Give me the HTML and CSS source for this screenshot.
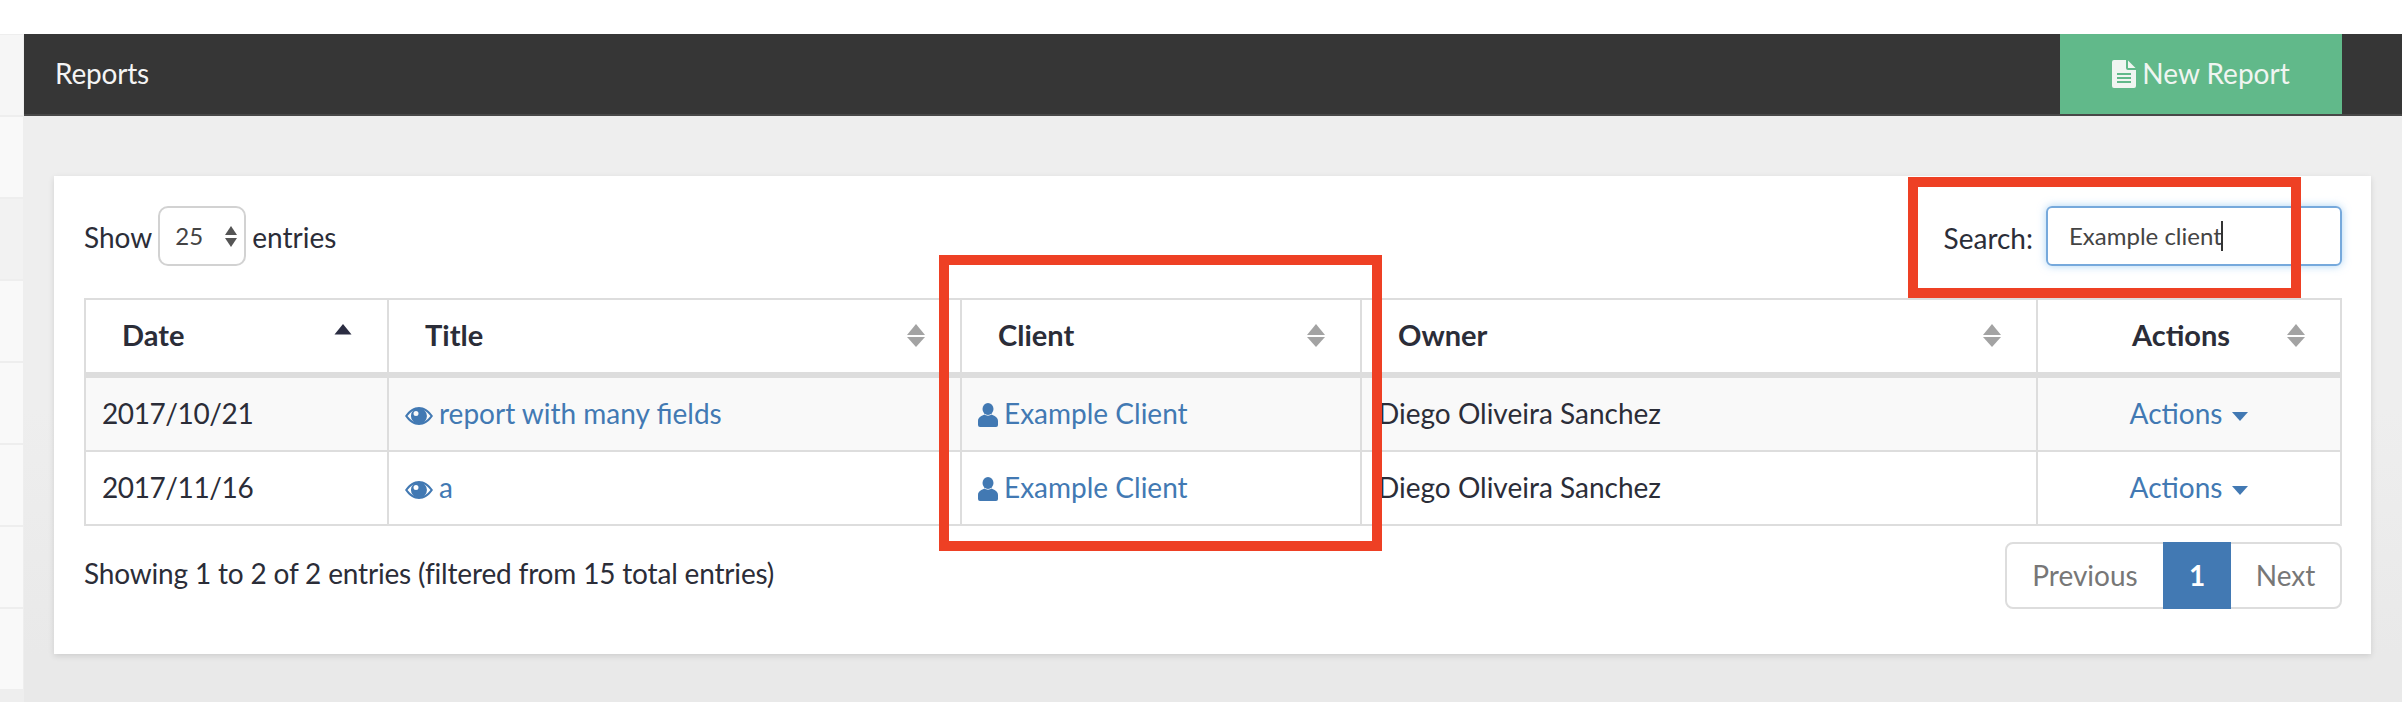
FILE: index.html
```html
<!DOCTYPE html>
<html lang="en">
<head>
<meta charset="utf-8">
<title>Reports</title>
<link rel="stylesheet" href="styles.css">
</head>
<body>
<div class="page">
  <aside class="sidebar">
    <div class="side-item side-first"></div>
    <div class="side-item"></div>
    <div class="side-item side-active"></div>
    <div class="side-item"></div>
    <div class="side-item"></div>
    <div class="side-item"></div>
    <div class="side-item"></div>
    <div class="side-item"></div>
  </aside>
  <main class="main">
    <header class="topbar">
      <span class="topbar-title">Reports</span>
      <a class="new-report">
        <svg class="icon-file" viewBox="0 0 24 28"><path fill-rule="evenodd" d="M0 2a2 2 0 0 1 2-2H14V8a2 2 0 0 0 2 2H24V26a2 2 0 0 1-2 2H2a2 2 0 0 1-2-2ZM5 13v2H19V13ZM5 17v2H19V17ZM5 21v2H19V21Z"/><path d="M16 0.5 23.5 8H16Z"/></svg>
        <span class="new-report-label">New Report</span>
      </a>
    </header>
    <section class="content">
      <div class="card">
        <div class="controls">
          <div class="length">
            <span>Show</span>
            <div class="select">
              <span>25</span>
              <svg class="select-arrows" viewBox="0 0 12 21"><path d="M6 0 12 9H0Z"/><path d="M0 12H12L6 21Z"/></svg>
            </div>
            <span>entries</span>
          </div>
          <div class="search">
            <span class="search-label">Search:</span>
            <div class="search-input"><span>Example client</span><i class="caret-line"></i></div>
          </div>
        </div>
        <table class="grid">
          <colgroup>
            <col class="col-a"><col class="col-b"><col class="col-c"><col class="col-d"><col class="col-e">
          </colgroup>
          <thead>
            <tr>
              <th>Date<svg class="sort" viewBox="0 0 18 23"><path class="sort-on" d="M9 0 17.500 10.500H0.500Z"/></svg></th>
              <th>Title<svg class="sort" viewBox="0 0 18 23"><path d="M9 0 18 11H0Z"/><path d="M0 13H18L9 23Z"/></svg></th>
              <th>Client<svg class="sort" viewBox="0 0 18 23"><path d="M9 0 18 11H0Z"/><path d="M0 13H18L9 23Z"/></svg></th>
              <th>Owner<svg class="sort" viewBox="0 0 18 23"><path d="M9 0 18 11H0Z"/><path d="M0 13H18L9 23Z"/></svg></th>
              <th class="th-actions">Actions<svg class="sort" viewBox="0 0 18 23"><path d="M9 0 18 11H0Z"/><path d="M0 13H18L9 23Z"/></svg></th>
            </tr>
          </thead>
          <tbody>
            <tr class="odd">
              <td class="td-date">2017/10/21</td>
              <td><a class="link"><svg class="icon-eye" viewBox="0 0 28 18"><path fill-rule="evenodd" d="M0 9C4 3 9 0 14 0S24 3 28 9C24 15 19 18 14 18S4 15 0 9ZM2.500 9C6 13.500 10 16 14 16S22 13.500 25.500 9C22 4.500 18 2 14 2S6 4.500 2.500 9Z"/><path fill-rule="evenodd" d="M14 1A8 8 0 1 1 13.900 17 8 8 0 0 1 14 1ZM11 4A2.500 2.500 0 1 0 11 9 2.500 2.500 0 0 0 11 4Z"/></svg>report with many fields</a></td>
              <td><a class="link"><svg class="icon-user" viewBox="0 0 20 24"><ellipse cx="10" cy="6" rx="5.500" ry="6"/><path d="M0 22V18C0 14 4 12.500 6.500 11.500 8 13 12 13 13.500 11.500 16 12.500 20 14 20 18V22Q20 24 18 24H2Q0 24 0 22Z"/></svg>Example Client</a></td>
              <td>Diego Oliveira Sanchez</td>
              <td class="td-actions"><a class="link">Actions<i class="caret-down"></i></a></td>
            </tr>
            <tr>
              <td class="td-date">2017/11/16</td>
              <td><a class="link"><svg class="icon-eye" viewBox="0 0 28 18"><path fill-rule="evenodd" d="M0 9C4 3 9 0 14 0S24 3 28 9C24 15 19 18 14 18S4 15 0 9ZM2.500 9C6 13.500 10 16 14 16S22 13.500 25.500 9C22 4.500 18 2 14 2S6 4.500 2.500 9Z"/><path fill-rule="evenodd" d="M14 1A8 8 0 1 1 13.900 17 8 8 0 0 1 14 1ZM11 4A2.500 2.500 0 1 0 11 9 2.500 2.500 0 0 0 11 4Z"/></svg>a</a></td>
              <td><a class="link"><svg class="icon-user" viewBox="0 0 20 24"><ellipse cx="10" cy="6" rx="5.500" ry="6"/><path d="M0 22V18C0 14 4 12.500 6.500 11.500 8 13 12 13 13.500 11.500 16 12.500 20 14 20 18V22Q20 24 18 24H2Q0 24 0 22Z"/></svg>Example Client</a></td>
              <td>Diego Oliveira Sanchez</td>
              <td class="td-actions"><a class="link">Actions<i class="caret-down"></i></a></td>
            </tr>
          </tbody>
        </table>
        <div class="table-footer">
          <span class="table-info">Showing 1 to 2 of 2 entries (filtered from 15 total entries)</span>
          <nav class="pager">
            <a class="pager-prev">Previous</a>
            <a class="pager-current">1</a>
            <a class="pager-next">Next</a>
          </nav>
        </div>
      </div>
    </section>
  </main>
</div>
<div class="callout callout-client"></div>
<div class="callout callout-search"></div>
</body>
</html>
```
FILE: styles.css
```css
* { box-sizing: border-box; }
html, body { margin: 0; height: 702px; overflow: hidden; background: #fff; }
body {
  position: relative;
  font-family: "Lato", "Liberation Sans", sans-serif;
  font-size: 28px;
  line-height: 36px;
  color: #2b2d38;
}
.page { display: flex; padding-top: 34px; height: 702px; }

.sidebar { width: 24px; flex: none; background: #eeeeee; padding-top: 1px; overflow: hidden; }
.side-item { width: 23px; height: 80px; margin-bottom: 2px; background: #f9f9f9; }
.side-first { background: #f6f6f6; }
.side-active { background: #f2f2f2; }

.main { flex: 1; display: flex; flex-direction: column; min-width: 0; }
.topbar {
  height: 82px;
  flex: none;
  display: flex;
  justify-content: space-between;
  padding: 0 60px 0 31px;
  background: #363636;
  border-bottom: 2px solid #484848;
  color: #f4f4f4;
}
.topbar-title { line-height: 78px; letter-spacing: -.2px; }
.new-report {
  width: 282px;
  display: flex;
  align-items: center;
  justify-content: center;
  gap: 6px;
  background: #61b98a;
  color: #f0f5f1;
}
.new-report-label { padding-bottom: 2px; }
.icon-file { width: 24px; height: 28px; fill: #f0f5f1; }

.content {
  flex: 1;
  padding: 60px 31px 0 30px;
  background: linear-gradient(#eeeeee, #eeeeee 50%, #e9e9e9 92%);
}
.card {
  height: 478px;
  padding: 30px 29px 0 30px;
  background: #fff;
  box-shadow: 0 2px 6px rgba(0, 0, 0, .12);
}

.controls { display: flex; justify-content: space-between; height: 60px; margin-bottom: 32px; }
.length, .search { display: flex; align-items: center; }
.length > span { padding-top: 2px; }
.search-label { padding-top: 4px; }
.length { gap: 6px; }
.search { gap: 13px; }
.select {
  width: 88px;
  height: 60px;
  display: flex;
  align-items: center;
  justify-content: space-between;
  padding: 0 7px 0 15px;
  border: 2px solid #d2d2d2;
  border-radius: 10px;
  font-size: 24px;
  color: #444;
}
.select-arrows { width: 12px; height: 21px; fill: #555; }
.search-input {
  width: 296px;
  height: 60px;
  display: flex;
  align-items: center;
  padding-left: 21px;
  border: 2px solid #76a9dc;
  border-radius: 6px;
  box-shadow: 0 0 8px rgba(102, 175, 233, .55);
  font-size: 24px;
  color: #444;
}
.caret-line { width: 2px; height: 30px; background: #333; margin-left: -1px; }

.grid {
  width: 2258px;
  table-layout: fixed;
  border-collapse: separate;
  border-spacing: 0;
  border-left: 2px solid #ddd;
  border-top: 2px solid #ddd;
}
.col-a { width: 303px; }
.col-b { width: 573px; }
.col-c { width: 400px; }
.col-d { width: 676px; }
.col-e { width: 304px; }
.grid th {
  position: relative;
  height: 78px;
  padding: 0 60px 2px 36px;
  text-align: left;
  font-size: 29px;
  font-weight: 700;
  border-right: 2px solid #ddd;
  border-bottom: 6px solid #ddd;
}
.grid th.th-actions { text-align: center; padding-right: 52px; }
.sort { position: absolute; top: 24px; right: 35px; width: 18px; height: 23px; fill: #a3a3a3; }
.sort .sort-on { fill: #2b2d42; }
.grid td {
  height: 74px;
  padding: 0 16px 3px;
  border-right: 2px solid #ddd;
  border-bottom: 2px solid #ddd;
  white-space: nowrap;
}
.grid .odd td { background: #f9f9f9; }
.grid td.td-date { letter-spacing: -.4px; }
.grid td.td-actions { text-align: center; }
.link { color: #4279b3; }
.icon-eye { width: 28px; height: 18px; fill: #4279b3; margin-right: 6px; vertical-align: -1px; }
.icon-user { width: 20px; height: 24px; fill: #4279b3; margin-right: 6px; vertical-align: -3px; }
.caret-down {
  display: inline-block;
  margin-left: 10px;
  vertical-align: 3px;
  border-top: 9px solid #4279b3;
  border-left: 8px solid transparent;
  border-right: 8px solid transparent;
}

.table-footer { display: flex; justify-content: space-between; align-items: center; margin-top: 16px; }
.table-info { letter-spacing: -.17px; padding-bottom: 6px; }
.pager {
  display: flex;
  height: 67px;
  border: 2px solid #ddd;
  border-radius: 8px;
  color: #777;
}
.pager a { display: flex; align-items: center; justify-content: center; padding-bottom: 2px; }
.pager-prev { width: 156px; }
.pager-current { width: 68px; margin: -2px 0; background: #4279b3; color: #fff; font-weight: 700; }
.pager-next { width: 109px; }

.callout { position: absolute; border: 10px solid #ee4024; }
.callout-client { left: 939px; top: 255px; width: 443px; height: 296px; }
.callout-search { left: 1908px; top: 177px; width: 393px; height: 121px; }
```
